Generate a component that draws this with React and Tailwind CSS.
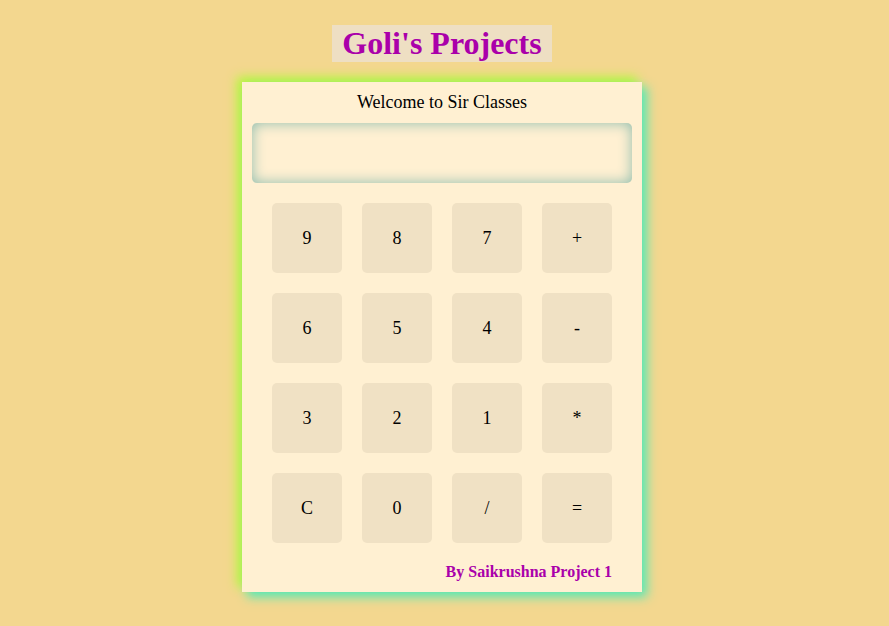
import React, { useState } from 'react';

const keys = ['9', '8', '7', '+', '6', '5', '4', '-', '3', '2', '1', '*', 'C', '0', '/', '='];

function App() {
    const [value, setValue] = useState('');

    const press = (k) => {
        if (k === 'C') return setValue('');
        if (k === '=') {
            try {
                // eslint-disable-next-line no-new-func
                setValue(String(Function('return ' + value)()));
            } catch (e) {
                setValue('Error');
            }
            return;
        }
        setValue(prev => prev + k);
    };

    return (
        <div className="min-h-screen bg-[#f3d78f] flex flex-col items-center pt-[25px] pr-[5px] font-['Liberation_Serif',serif]">
            <h1 className="bg-[#eedfc3] text-[#aa00aa] text-[32px] font-bold leading-[37px] px-[10px]">Goli's Projects</h1>

            <div className="mt-[20px] w-[400px] bg-[#fff0d2] pt-[10px] pb-[11px] shadow-[5px_5px_10px_#55e8b8,-5px_-5px_10px_#b6f83a]">
                <p className="text-center text-[18px] leading-[21px] text-black">Welcome to Sir Classes</p>

                <div className="px-[10px] mt-[10px]">
                    <input
                        type="text"
                        value={value}
                        readOnly
                        className="w-full h-[60px] rounded-[5px] bg-[#fff0d2] px-3 text-right text-2xl outline-none shadow-[inset_0_0_14px_#8cbcae]"
                    />
                </div>

                <div className="grid grid-cols-4 gap-[20px] px-[30px] mt-[20px]">
                    {keys.map(k => (
                        <button
                            key={k}
                            onClick={() => press(k)}
                            className="w-[70px] h-[70px] rounded-[5px] bg-[#f0e1c4] text-[18px] text-black"
                        >
                            {k}
                        </button>
                    ))}
                </div>

                <p className="text-right pr-[30px] mt-[20px] text-[16px] leading-[18px] font-bold text-[#aa00aa]">By Saikrushna Project 1</p>
            </div>
        </div>
    );
}

export default App;
